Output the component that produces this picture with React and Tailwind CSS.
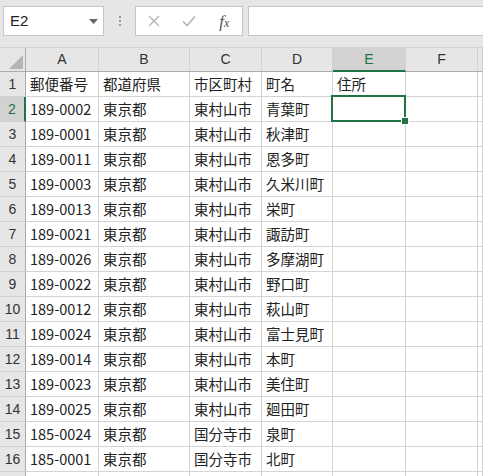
import { useState } from 'react';

const cols = [
  { key: 'A', w: 'w-[73px]' },
  { key: 'B', w: 'w-[91px]' },
  { key: 'C', w: 'w-[72px]' },
  { key: 'D', w: 'w-[71px]' },
  { key: 'E', w: 'w-[73px]' },
  { key: 'F', w: 'w-[72px]' },
  { key: 'G', w: 'flex-1' },
];

const rows = [
  ['郵便番号', '都道府県', '市区町村', '町名', '住所'],
  ['189-0002', '東京都', '東村山市', '青葉町'],
  ['189-0001', '東京都', '東村山市', '秋津町'],
  ['189-0011', '東京都', '東村山市', '恩多町'],
  ['189-0003', '東京都', '東村山市', '久米川町'],
  ['189-0013', '東京都', '東村山市', '栄町'],
  ['189-0021', '東京都', '東村山市', '諏訪町'],
  ['189-0026', '東京都', '東村山市', '多摩湖町'],
  ['189-0022', '東京都', '東村山市', '野口町'],
  ['189-0012', '東京都', '東村山市', '萩山町'],
  ['189-0024', '東京都', '東村山市', '富士見町'],
  ['189-0014', '東京都', '東村山市', '本町'],
  ['189-0023', '東京都', '東村山市', '美住町'],
  ['189-0025', '東京都', '東村山市', '廻田町'],
  ['185-0024', '東京都', '国分寺市', '泉町'],
  ['185-0001', '東京都', '国分寺市', '北町'],
  [],
];

const font = { fontFamily: '"Noto Sans CJK JP", "Noto Sans", sans-serif' };

export default function App() {
  const [active] = useState({ row: 2, col: 'E' });

  return (
    <div className="w-[483px] h-[476px] overflow-hidden bg-white text-[#222]" style={font}>
      {/* Formula bar */}
      <div className="h-[47px] bg-[#e6e6e6] flex items-start pt-[6px] pl-[3px] gap-0">
        <div className="w-[101px] h-[30px] bg-white border border-[#c6c6c6] flex items-center justify-between pl-[6px] pr-[5px]">
          <span className="text-[15px] text-[#222]" style={{ fontFamily: '"Liberation Sans", Arial, sans-serif' }}>E2</span>
          <svg width="9" height="5" viewBox="0 0 9 5"><path d="M0 0h9L4.5 5z" fill="#666" /></svg>
        </div>
        <div className="w-[31px] h-[30px] flex flex-col items-center justify-center gap-[2px]">
          <span className="w-[2px] h-[2px] bg-[#9a9a9a]" />
          <span className="w-[2px] h-[2px] bg-[#9a9a9a]" />
          <span className="w-[2px] h-[2px] bg-[#9a9a9a]" />
        </div>
        <div className="w-[108px] h-[30px] bg-white border border-[#c6c6c6] flex items-center">
          <div className="w-[36px] flex justify-center">
            <svg width="12" height="12" viewBox="0 0 12 12"><path d="M1 1l10 10M11 1L1 11" stroke="#b3b3b3" strokeWidth="1.3" /></svg>
          </div>
          <div className="w-[36px] flex justify-center">
            <svg width="14" height="12" viewBox="0 0 14 12"><path d="M1 6.5l4 4L13 1.5" stroke="#b3b3b3" strokeWidth="1.6" fill="none" /></svg>
          </div>
          <div className="w-[36px] flex justify-center">
            <span className="italic text-[17px] leading-none text-[#555]" style={{ fontFamily: '"Liberation Serif", serif' }}>
              f<span className="text-[12px]">x</span>
            </span>
          </div>
        </div>
        <div className="ml-[5px] flex-1 h-[30px] bg-white border border-[#c6c6c6] border-r-0" />
      </div>

      {/* Column headers */}
      <div className="flex h-[25px] bg-[#e6e6e6] border-t border-[#d4d4d4]">
        <div className="w-[26px] h-full border-r border-b border-[#ababab] flex items-end justify-end pr-[2px] pb-[2px]">
          <svg width="14" height="14" viewBox="0 0 14 14"><path d="M14 0v14H0z" fill="#b4b4b4" /></svg>
        </div>
        {cols.map((c) => {
          const sel = c.key === active.col;
          return (
            <div
              key={c.key}
              className={`${c.w} h-full flex items-center justify-center text-[14px] border-r border-[#d0d0d0] ${
                sel ? 'bg-[#d2d2d2] text-[#217346] border-b-2 border-b-[#217346]' : 'text-[#333] border-b border-b-[#ababab]'
              }`}
              style={{ fontFamily: '"Liberation Sans", Arial, sans-serif' }}
            >
              {c.key === 'G' ? '' : c.key}
            </div>
          );
        })}
      </div>

      {/* Rows */}
      {rows.map((r, i) => {
        const n = i + 1;
        const rowSel = n === active.row;
        return (
          <div key={n} className="flex h-[25px]">
            <div
              className={`w-[26px] h-full flex items-center justify-center text-[14px] border-b border-[#d0d0d0] ${
                rowSel ? 'bg-[#d2d2d2] text-[#217346] border-r-2 border-r-[#217346]' : 'bg-[#e6e6e6] text-[#333] border-r border-r-[#ababab]'
              }`}
              style={{ fontFamily: '"Liberation Sans", Arial, sans-serif' }}
            >
              {r.length ? n : ''}
            </div>
            {cols.map((c, j) => {
              const sel = rowSel && c.key === active.col;
              return (
                <div
                  key={c.key}
                  className={`${c.w} relative h-full border-r border-b border-[#d4d4d4] flex items-center pl-[4px] text-[14.5px] whitespace-nowrap overflow-visible`}
                >
                  {r[j] || ''}
                  {sel && (
                    <div className="absolute z-10 -left-[2px] -top-[2px] w-[75px] h-[27px] border-2 border-[#217346]">
                      <div className="absolute -right-[5px] -bottom-[5px] w-[8px] h-[8px] bg-[#217346] border border-white" />
                    </div>
                  )}
                </div>
              );
            })}
          </div>
        );
      })}
    </div>
  );
}
